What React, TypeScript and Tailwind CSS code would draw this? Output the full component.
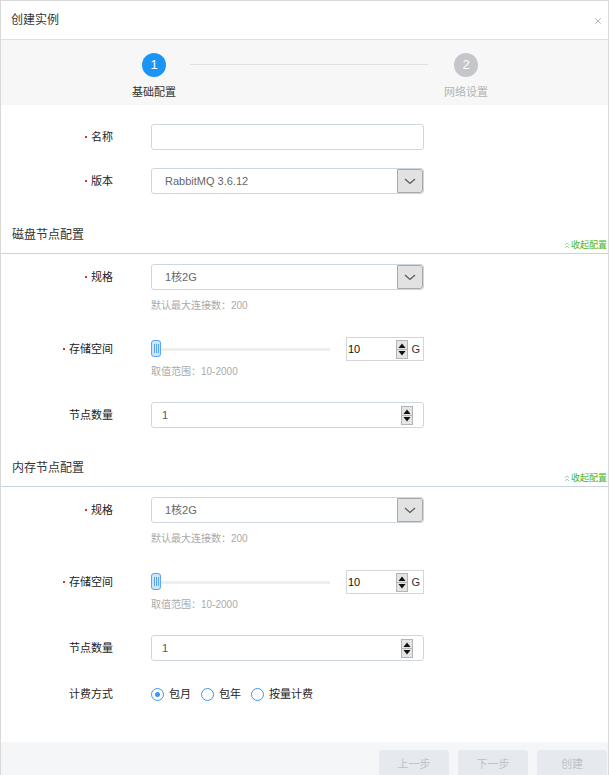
import React from 'react';
import { X } from 'lucide-react';

const font = "font-['Liberation_Sans','Noto_Sans_CJK_SC',sans-serif]";

const Label: React.FC<{ text: string; required?: boolean }> = ({ text, required }) => (
  <div className="w-[112px] flex items-center justify-end shrink-0">
    {required && <span className="inline-block w-[2px] h-[2px] bg-[#e0301e] mr-[4px]" />}
    <span className="text-[11px] text-[#222]">{text}</span>
  </div>
);

const Spinner = () => (
  <svg width="12" height="19" viewBox="0 0 12 19" className="shrink-0">
    <rect x="0.5" y="0.5" width="11" height="18" fill="#e4e4e4" stroke="#b5b5b5" />
    <line x1="1" y1="9.5" x2="11" y2="9.5" stroke="#b5b5b5" />
    <path d="M2.5 8 L6 3.5 L9.5 8 Z" fill="#111" />
    <path d="M2.5 11 L6 15.5 L9.5 11 Z" fill="#111" />
  </svg>
);

const SelectBox: React.FC<{ value: string }> = ({ value }) => (
  <div className="ml-[38px] w-[273px] h-[26px] flex border border-[#cdd6e1] rounded-[3px] overflow-hidden bg-white">
    <div className="flex-1 flex items-center pl-[13px] text-[11px] text-[#666]">{value}</div>
    <div className="w-[26px] h-full bg-[#e2e2e2] border border-[#a9a9a9] rounded-r-[3px] flex items-center justify-center">
      <svg width="12" height="7" viewBox="0 0 12 7">
        <path d="M1 1 L6 5.5 L11 1" fill="none" stroke="#555" strokeWidth="1.1" />
      </svg>
    </div>
  </div>
);

const Hint: React.FC<{ text: string; mt: string }> = ({ text, mt }) => (
  <div className={`${mt} pl-[150px] h-[14px] leading-[14px] text-[10px] text-[#aaa]`}>{text}</div>
);

const StorageRow: React.FC<{ mt: string }> = ({ mt }) => (
  <div className={`${mt} flex items-center h-[24px]`}>
    <Label text="存储空间" required />
    <div className="ml-[38px] w-[179px] h-[18px] relative flex items-center">
      <div className="w-full h-[3px] bg-[#eeeeee]" />
      <div className="absolute left-0 top-0 w-[10px] h-[17px] rounded-[3px] border border-[#5aa6f2] bg-[#cfe5fb] flex items-center justify-center gap-[1px]">
        <span className="w-[1px] h-[9px] bg-[#5aa6f2]" />
        <span className="w-[1px] h-[9px] bg-[#5aa6f2]" />
        <span className="w-[1px] h-[9px] bg-[#5aa6f2]" />
      </div>
    </div>
    <div className="ml-[16px] w-[78px] h-[24px] border border-[#d6d6d6] flex items-center pl-[1px] pr-[3px]">
      <span className="flex-1 text-[11px] text-[#111]">10</span>
      <Spinner />
      <span className="ml-[3px] text-[11px] text-[#333]">G</span>
    </div>
  </div>
);

const CountRow: React.FC<{ mt: string }> = ({ mt }) => (
  <div className={`${mt} flex items-center h-[26px]`}>
    <Label text="节点数量" />
    <div className="ml-[38px] w-[273px] h-[26px] border border-[#cdd6e1] rounded-[3px] flex items-center pl-[10px] pr-[10px]">
      <span className="flex-1 text-[11px] text-[#5b5470]">1</span>
      <Spinner />
    </div>
  </div>
);

const SectionHeader: React.FC<{ title: string; mt: string }> = ({ title, mt }) => (
  <div className={`${mt} h-[31px] border-b border-[#c9d4e0] flex justify-between pl-[11px]`}>
    <div className="h-[24px] leading-[24px] text-[12px] text-[#333]">{title}</div>
    <div className="self-end mb-[2px] mr-[1px] flex items-center text-[9px] leading-[12px] text-[#47b51d]">
      <svg width="6" height="7" viewBox="0 0 6 7" className="mr-[1px]">
        <path d="M1 3 L3 1 L5 3 M1 6 L3 4 L5 6" fill="none" stroke="#9fd88a" strokeWidth="1" />
      </svg>
      收起配置
    </div>
  </div>
);

const Radio: React.FC<{ label: string; checked?: boolean }> = ({ label, checked }) => (
  <div className="flex items-center mr-[10px]">
    <span className="w-[13px] h-[13px] rounded-full border border-[#3d97ee] flex items-center justify-center">
      {checked && <span className="w-[5px] h-[5px] rounded-full bg-[#3d97ee]" />}
    </span>
    <span className="ml-[5px] text-[11px] text-[#222]">{label}</span>
  </div>
);

export default function App() {
  return (
    <div className={`${font} w-[609px] h-[775px] overflow-hidden bg-white border-l border-r border-t border-[#d9d9d9] flex flex-col`}>
      {/* Title bar */}
      <div className="h-[39px] shrink-0 flex items-center justify-between pl-[10px] pr-[5px] border-b border-[#dde1e6]">
        <span className="text-[12px] text-[#333]">创建实例</span>
        <X size={10} className="text-[#aaa] mt-[2px]" />
      </div>

      {/* Steps */}
      <div className="h-[65px] shrink-0 bg-[#f7f7f7] flex items-start pl-[123px] pt-[13px]">
        <div className="w-[60px] flex flex-col items-center">
          <div className="w-[24px] h-[24px] rounded-full bg-[#1a95f5] text-white text-[13px] flex items-center justify-center">1</div>
          <div className="mt-[7px] text-[11px] text-[#333]">基础配置</div>
        </div>
        <div className="ml-[6px] mt-[11px] w-[238px] h-[1px] bg-[#dde0e5]" />
        <div className="ml-[8px] w-[60px] flex flex-col items-center">
          <div className="w-[24px] h-[24px] rounded-full bg-[#c4c6ca] text-white text-[13px] flex items-center justify-center">2</div>
          <div className="mt-[7px] text-[11px] text-[#b4b4b4]">网络设置</div>
        </div>
      </div>

      {/* Body */}
      <div className="flex-1 flex flex-col pt-[19px]">
        <div className="flex items-center h-[26px]">
          <Label text="名称" required />
          <div className="ml-[38px] w-[273px] h-[26px] border border-[#cdd6e1] rounded-[3px]" />
        </div>
        <div className="mt-[18px] flex items-center h-[26px]">
          <Label text="版本" required />
          <SelectBox value="RabbitMQ 3.6.12" />
        </div>

        <SectionHeader title="磁盘节点配置" mt="mt-[29px]" />
        <div className="mt-[10px] flex items-center h-[26px]">
          <Label text="规格" required />
          <SelectBox value="1核2G" />
        </div>
        <Hint text="默认最大连接数：200" mt="mt-[9px]" />
        <StorageRow mt="mt-[24px]" />
        <Hint text="取值范围：10-2000" mt="mt-[4px]" />
        <CountRow mt="mt-[23px]" />

        <SectionHeader title="内存节点配置" mt="mt-[28px]" />
        <div className="mt-[10px] flex items-center h-[26px]">
          <Label text="规格" required />
          <SelectBox value="1核2G" />
        </div>
        <Hint text="默认最大连接数：200" mt="mt-[9px]" />
        <StorageRow mt="mt-[24px]" />
        <Hint text="取值范围：10-2000" mt="mt-[4px]" />
        <CountRow mt="mt-[23px]" />

        <div className="mt-[23px] flex items-center h-[20px]">
          <Label text="计费方式" />
          <div className="ml-[38px] flex items-center">
            <Radio label="包月" checked />
            <Radio label="包年" />
            <Radio label="按量计费" />
          </div>
        </div>
      </div>

      {/* Footer */}
      <div className="h-[33px] shrink-0 bg-[#f5f6f7] flex justify-end gap-[9px] pt-[8px] pr-[1px]">
        <button className="w-[70px] h-[28px] rounded-[3px] bg-[#e6e9ed] text-[11px] text-[#bcc3cb]">上一步</button>
        <button className="w-[70px] h-[28px] rounded-[3px] bg-[#e6e9ed] text-[11px] text-[#bcc3cb]">下一步</button>
        <button className="w-[70px] h-[28px] rounded-[3px] bg-[#e6e9ed] text-[11px] text-[#bcc3cb]">创建</button>
      </div>
    </div>
  );
}
